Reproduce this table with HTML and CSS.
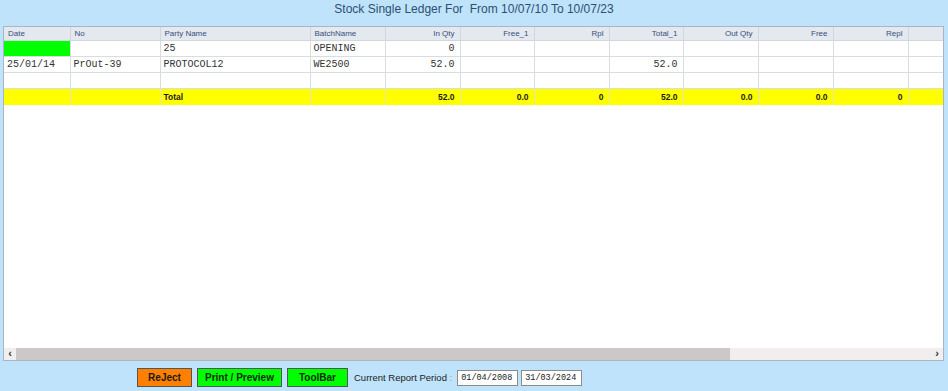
FILE: index.html
```html
<!DOCTYPE html>
<html>
<head>
<meta charset="utf-8">
<link rel="stylesheet" href="styles.css">
</head>
<body>
<div class="page">
  <div class="title">Stock Single Ledger For&nbsp; From 10/07/10 To 10/07/23</div>
  <div class="grid">
    <table class="ledger">
      <colgroup>
        <col style="width:66px"><col style="width:90px"><col style="width:150px"><col style="width:75px">
        <col style="width:75px"><col style="width:74px"><col style="width:75px"><col style="width:74px">
        <col style="width:75px"><col style="width:75px"><col style="width:75px"><col style="width:35px">
      </colgroup>
      <thead>
        <tr>
          <th>Date</th><th>No</th><th>Party Name</th><th>BatchName</th>
          <th class="r">In Qty</th><th class="r">Free_1</th><th class="r">Rpl</th><th class="r">Total_1</th>
          <th class="r">Out Qty</th><th class="r">Free</th><th class="r">Repl</th><th></th>
        </tr>
      </thead>
      <tbody>
        <tr>
          <td class="green"></td><td></td><td>25</td><td>OPENING</td>
          <td class="r">0</td><td></td><td></td><td></td><td></td><td></td><td></td><td></td>
        </tr>
        <tr>
          <td>25/01/14</td><td>PrOut-39</td><td>PROTOCOL12</td><td>WE2500</td>
          <td class="r">52.0</td><td></td><td></td><td class="r">52.0</td><td></td><td></td><td></td><td></td>
        </tr>
        <tr>
          <td></td><td></td><td></td><td></td><td></td><td></td><td></td><td></td><td></td><td></td><td></td><td></td>
        </tr>
        <tr class="total">
          <td></td><td></td><td>Total</td><td></td>
          <td class="r">52.0</td><td class="r">0.0</td><td class="r">0</td><td class="r">52.0</td>
          <td class="r">0.0</td><td class="r">0.0</td><td class="r">0</td><td></td>
        </tr>
      </tbody>
    </table>
    <div class="spacer"></div>
    <div class="hscroll">
      <div class="arrow">&#8249;</div>
      <div class="thumb"></div>
      <div class="track"></div>
      <div class="arrow">&#8250;</div>
    </div>
  </div>
  <div class="footer">
    <button class="btn orange">ReJect</button>
    <button class="btn green-btn">Print / Preview</button>
    <button class="btn green-btn toolbar">ToolBar</button>
    <span class="label">Current Report Period <span class="colon">:</span></span>
    <span class="date-box">01/04/2008</span>
    <span class="date-box">31/03/2024</span>
  </div>
</div>
</body>
</html>
```

FILE: styles.css
```css
html, body {
  margin: 0;
  padding: 0;
  background: #bfe3fb;
}
.page {
  width: 948px;
  height: 391px;
  display: flex;
  flex-direction: column;
  font-family: "Liberation Sans", Arial, sans-serif;
}
.title {
  height: 26px;
  line-height: 19px;
  text-align: center;
  font-size: 12px;
  color: #2c4f72;
}
.grid {
  margin-left: 3px;
  width: 939px;
  height: 333px;
  border: 1px solid #a9b4c4;
  background: #ffffff;
  display: flex;
  flex-direction: column;
  overflow: hidden;
}
.ledger {
  border-collapse: collapse;
  table-layout: fixed;
  width: 939px;
}
.ledger th {
  height: 13px;
  padding: 0 4px;
  font-weight: normal;
  font-size: 8px;
  color: #34507c;
  background: #e4e8ef;
  border-right: 1px solid #d2d7df;
  border-bottom: 1px solid #d2d7df;
  text-align: left;
  white-space: nowrap;
  overflow: hidden;
}
.ledger td {
  height: 15px;
  padding: 0 4px 0 3px;
  font-family: "Liberation Mono", "Courier New", monospace;
  font-size: 10px;
  color: #333;
  border-right: 1px solid #d8dce3;
  border-bottom: 1px solid #d8dce3;
  white-space: nowrap;
  overflow: hidden;
}
.ledger .r {
  text-align: right;
  padding-right: 5px;
}
.ledger td.green {
  background: #00ff00;
}
.ledger tr.total td {
  background: #ffff00;
  font-family: "Liberation Sans", Arial, sans-serif;
  font-weight: bold;
  font-size: 8.5px;
  color: #1a1a1a;
  border-right-color: #e8e8a0;
  border-bottom-color: #ffff00;
}
.spacer {
  flex: 1;
}
.hscroll {
  height: 12px;
  display: flex;
  background: #f2eeee;
}
.arrow {
  width: 12px;
  font-size: 11px;
  line-height: 11px;
  font-weight: bold;
  text-align: center;
  color: #333;
}
.thumb {
  width: 714px;
  background: #cdc8c8;
}
.track {
  flex: 1;
}
.footer {
  flex: 1;
  display: flex;
  align-items: center;
  padding-left: 137px;
  padding-top: 3px;
}
.btn {
  height: 19px;
  margin: 0 5px 0 0;
  padding: 0;
  border: 1px solid #555;
  font-family: "Liberation Sans", Arial, sans-serif;
  font-weight: bold;
  font-size: 10px;
  color: #1a1a1a;
}
.orange {
  width: 55px;
  background: #ff8000;
}
.green-btn {
  width: 85px;
  background: #00ff00;
  color: #0a2a0a;
}
.toolbar {
  width: 61px;
  margin-right: 6px;
}
.label {
  font-size: 9.5px;
  color: #222;
  margin-right: 5px;
}
.colon {
  color: #8aa;
}
.date-box {
  width: 61px;
  height: 16px;
  margin-right: 3px;
  border: 1px solid #8c8c8c;
  background: #fff;
  font-family: "Liberation Mono", "Courier New", monospace;
  font-size: 8.5px;
  line-height: 14px;
  padding-left: 3px;
  box-sizing: border-box;
  color: #222;
}
```
